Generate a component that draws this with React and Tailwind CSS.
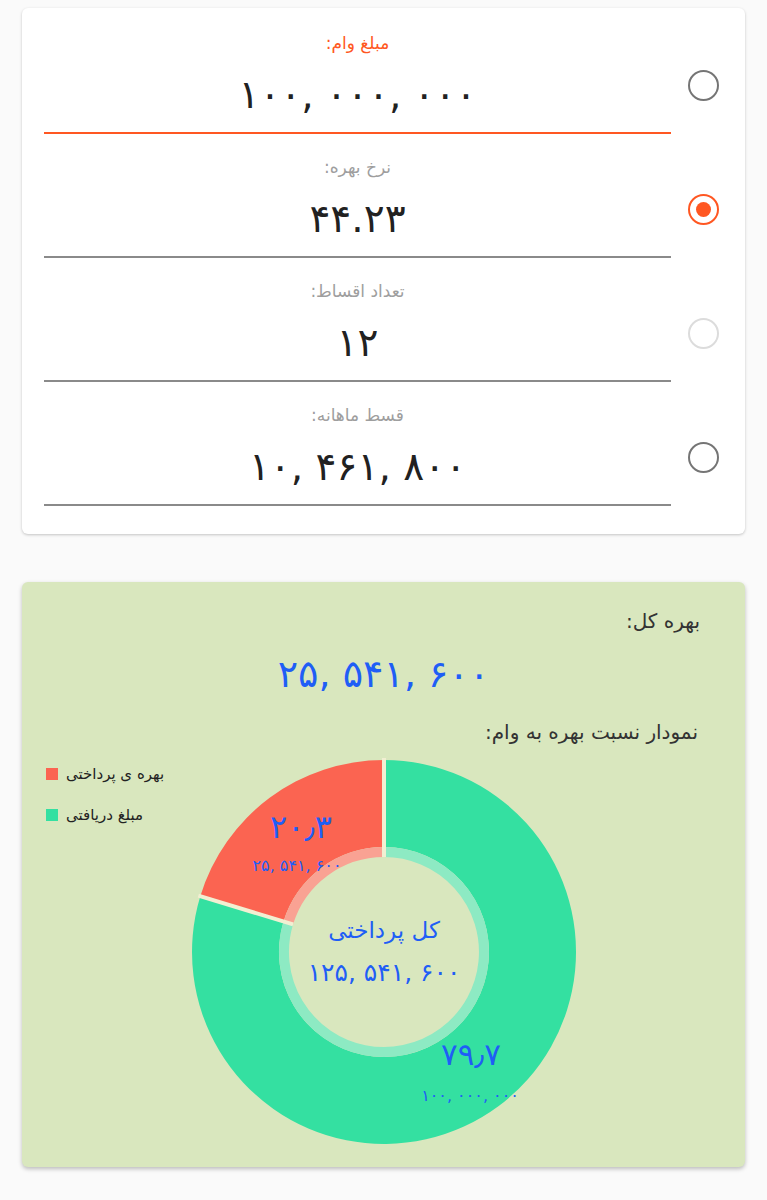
const fields = [
  { label: 'مبلغ وام:', value: '۱۰۰, ۰۰۰, ۰۰۰', state: 'off', active: true },
  { label: 'نرخ بهره:', value: '۴۴.۲۳', state: 'on' },
  { label: 'تعداد اقساط:', value: '۱۲', state: 'disabled' },
  { label: 'قسط ماهانه:', value: '۱۰, ۴۶۱, ۸۰۰', state: 'off' },
]

const font = { fontFamily: '"DejaVu Sans", "Noto Sans", sans-serif' }

function Radio({ state }) {
  if (state === 'on') {
    return (
      <div className="w-[31px] h-[31px] rounded-full border-[2.5px] border-[#ff5722] flex items-center justify-center shrink-0">
        <div className="w-[15px] h-[15px] rounded-full bg-[#ff5722]" />
      </div>
    )
  }
  return (
    <div
      className={
        state === 'disabled'
          ? 'w-[31px] h-[31px] rounded-full border-[2.5px] border-[#dcdcdc] shrink-0'
          : 'w-[31px] h-[31px] rounded-full border-[2.5px] border-[#757575] shrink-0'
      }
    />
  )
}

function Field({ f, first }) {
  return (
    <div className={first ? 'flex items-center gap-[17px]' : 'flex items-center gap-[17px] mt-[22px]'}>
      <div className="flex-1 flex flex-col items-center">
        <div
          dir="rtl"
          className={f.active ? 'h-[22px] text-[17px] leading-[22px] text-[#ff5722]' : 'h-[22px] text-[17px] leading-[22px] text-[#9e9e9e]'}
        >
          {f.label}
        </div>
        <div dir="ltr" className="mt-[17px] h-[48px] text-[39px] leading-[48px] text-[#212121]">
          {f.value}
        </div>
        <div className={f.active ? 'mt-[13px] w-full h-[2px] bg-[#ff5722]' : 'mt-[13px] w-full h-[2px] bg-[#8a8a8a]'} />
      </div>
      <div className="mt-[4px]">
        <Radio state={f.state} />
      </div>
    </div>
  )
}

function Donut() {
  const red = '#fb6451'
  const green = '#34e0a1'
  return (
    <svg width="400" height="400" viewBox="0 0 400 400">
      {/* segments */}
      <path d="M16.3 144.2 A192 192 0 0 1 200 8 L200 95 A105 105 0 0 0 99.5 169.5 Z" fill={red} />
      <path d="M200 8 A192 192 0 1 1 16.3 144.2 L99.5 169.5 A105 105 0 1 0 200 95 Z" fill={green} />
      {/* faded inner ring */}
      <path d="M104.3 170.9 A100 100 0 0 1 200 100" fill="none" stroke="#f9a293" strokeWidth="10" />
      <path d="M200 100 A100 100 0 1 1 104.3 170.9" fill="none" stroke="#8deac3" strokeWidth="10" />
      {/* separators */}
      <line x1="200" y1="6" x2="200" y2="105" stroke="#f2efd2" strokeWidth="4" />
      <line x1="14.4" y1="143.6" x2="109.1" y2="172.4" stroke="#f2efd2" strokeWidth="4" />
      <g fill="#1f5ef6" textAnchor="middle" style={font}>
        <text x="117" y="86" fontSize="32">۲۰٫۳</text>
        <text x="113" y="119" fontSize="16">۲۵, ۵۴۱, ۶۰۰</text>
        <text x="200" y="186" fontSize="23">کل پرداختی</text>
        <text x="200" y="229" fontSize="25">۱۲۵, ۵۴۱, ۶۰۰</text>
        <text x="287" y="313" fontSize="31">۷۹٫۷</text>
        <text x="286" y="349" fontSize="16">۱۰۰, ۰۰۰, ۰۰۰</text>
      </g>
    </svg>
  )
}

export default function App() {
  return (
    <div className="min-h-[1200px] bg-[#fafafa] pt-[8px] px-[22px] pb-[32px]" style={font}>
      <div className="bg-white rounded-[6px] shadow-[0_1px_3px_rgba(0,0,0,0.22)] pt-[24px] pb-[28px] pl-[22px] pr-[26px]">
        {fields.map((f, i) => (
          <Field key={f.label} f={f} first={i === 0} />
        ))}
      </div>

      <div className="mt-[48px] bg-[#d9e7be] rounded-[6px] shadow-[0_2px_4px_rgba(0,0,0,0.25)] pt-[25px] pb-[15px]">
        <div dir="rtl" className="pr-[45px] text-[20px] leading-[28px] text-[#333]">
          بهره کل:
        </div>
        <div dir="ltr" className="mt-[15px] text-center text-[38px] leading-[48px] text-[#1f5ef6]">
          ۲۵, ۵۴۱, ۶۰۰
        </div>
        <div dir="rtl" className="mt-[20px] pr-[47px] text-[20px] leading-[28px] text-[#333]">
          نمودار نسبت بهره به وام:
        </div>
        <div className="relative mt-[6px] flex justify-center">
          <Donut />
          {/* legend */}
          <div className="absolute left-[24px] top-[15px] flex flex-col gap-[27px]">
            <div className="flex items-center gap-[8px]">
              <div className="w-[12px] h-[12px] bg-[#fb6451]" />
              <span dir="rtl" className="text-[15px] leading-[14px] text-[#222]">بهره ی پرداختی</span>
            </div>
            <div className="flex items-center gap-[8px]">
              <div className="w-[12px] h-[12px] bg-[#34e0a1]" />
              <span dir="rtl" className="text-[15px] leading-[14px] text-[#222]">مبلغ دریافتی</span>
            </div>
          </div>
        </div>
      </div>
    </div>
  )
}
